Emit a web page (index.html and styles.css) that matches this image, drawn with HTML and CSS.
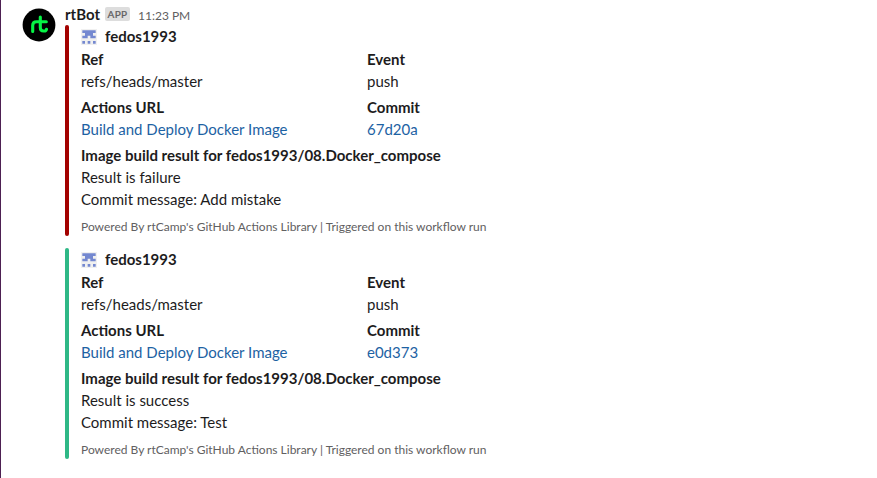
FILE: index.html
```html
<!DOCTYPE html>
<html lang="en">
<head>
<meta charset="utf-8">
<title>rtBot</title>
<link rel="stylesheet" href="styles.css">
</head>
<body>
<main class="message">
  <svg class="avatar" viewBox="0 0 34 34" aria-hidden="true"><circle cx="17" cy="17" r="16.4" fill="#000"/><path d="M10.7 23.5V17.500Q10.7 13.7 14.5 13.700H24.3M18.3 9V19.5Q18.3 23 21.5 23H22.2Q24.2 23 24.5 21.2" fill="none" stroke="#05f545" stroke-width="3.1" stroke-linecap="round"/></svg>
  <div class="body">
    <header class="head"><b class="name">rtBot</b><span class="badge">APP</span><time class="time">11:23 PM</time></header>
    <section class="attachment failure">
      <div class="bar"></div>
      <div class="content">
        <div class="author"><svg class="identicon" viewBox="0 0 12 12"><path fill="#f0f0f0" d="M0 0h12v12H0z"/><path fill="#7488d0" d="M1 1h10v2H9v2h2v2H7V5H5v2H1V5h2V3H1zM1 9h2v2H1zM5 9h2v2H5zM9 9h2v2H9z"/></svg><b>fedos1993</b></div>
        <div class="fields">
          <div class="field"><b>Ref</b><span>refs/heads/master</span></div>
          <div class="field"><b>Event</b><span>push</span></div>
          <div class="field"><b>Actions URL</b><a>Build and Deploy Docker Image</a></div>
          <div class="field"><b>Commit</b><a>67d20a</a></div>
          <div class="field wide"><b>Image build result for fedos1993/08.Docker_compose</b><span>Result is failure</span><span>Commit message: Add mistake</span></div>
        </div>
        <footer class="foot">Powered By rtCamp's GitHub Actions Library | Triggered on this workflow run</footer>
      </div>
    </section>
    <section class="attachment success">
      <div class="bar"></div>
      <div class="content">
        <div class="author"><svg class="identicon" viewBox="0 0 12 12"><path fill="#f0f0f0" d="M0 0h12v12H0z"/><path fill="#7488d0" d="M1 1h10v2H9v2h2v2H7V5H5v2H1V5h2V3H1zM1 9h2v2H1zM5 9h2v2H5zM9 9h2v2H9z"/></svg><b>fedos1993</b></div>
        <div class="fields">
          <div class="field"><b>Ref</b><span>refs/heads/master</span></div>
          <div class="field"><b>Event</b><span>push</span></div>
          <div class="field"><b>Actions URL</b><a>Build and Deploy Docker Image</a></div>
          <div class="field"><b>Commit</b><a>e0d373</a></div>
          <div class="field wide"><b>Image build result for fedos1993/08.Docker_compose</b><span>Result is success</span><span>Commit message: Test</span></div>
        </div>
        <footer class="foot">Powered By rtCamp's GitHub Actions Library | Triggered on this workflow run</footer>
      </div>
    </section>
  </div>
</main>
</body>
</html>
```
FILE: styles.css
```css
* { box-sizing: border-box; }
body { margin: 0; background: #fff; color: #1d1c1d; font: 15px/22px Lato, sans-serif; }
b { font-weight: 700; }
.message { display: flex; height: 478px; padding: 4px 0 0 21px; border-left: 1px solid #4d2052; overflow: hidden; }
.avatar { width: 34px; height: 34px; margin-top: 4px; flex: none; }
.body { margin-left: 9px; }
.head { display: flex; align-items: flex-start; height: 21px; }
.name { line-height: 20px; }
.badge { width: 25px; margin: 3px 8px 0 5px; text-align: center; background: #dddddd; border-radius: 2px; color: #616061; font-size: 10px; line-height: 14px; font-weight: 500; letter-spacing: .3px; -webkit-text-stroke: .2px #616061; }
.time { margin-top: 1px; color: #616061; font-size: 12px; }
.attachment { display: flex; height: 211px; margin-bottom: 12px; }
.bar { width: 4px; border-radius: 4px; margin-right: 12px; }
.failure .bar { background: #a30200; }
.success .bar { background: #2eb886; }
.author { display: flex; align-items: center; height: 22px; }
.identicon { width: 16px; height: 16px; margin: 2px 8px 0 0; }
.fields { display: grid; grid-template-columns: 286px 286px; row-gap: 4px; margin-top: 1px; }
.field { display: flex; flex-direction: column; }
.wide { grid-column: 1 / 3; }
.field a { color: #1d62a3; }
.foot { margin-top: 7px; color: #616061; font-size: 12px; line-height: 20px; }
```
